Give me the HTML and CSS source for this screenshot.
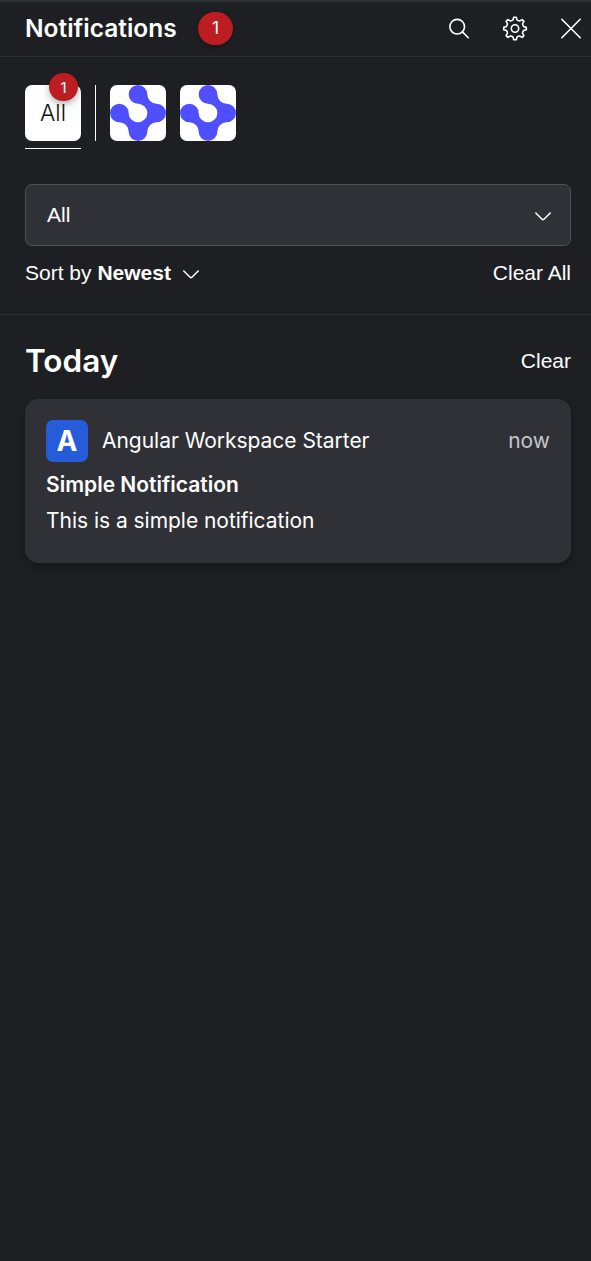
FILE: index.html
```html
<!DOCTYPE html>
<html lang="en">
<head>
<meta charset="utf-8">
<title>Notifications</title>
<link rel="stylesheet" href="styles.css">
</head>
<body>
<svg class="defs" width="0" height="0">
  <symbol id="logo" viewBox="0 0 56 56">
    <path fill="#4f4fff" d="M28 0A9.33 9.33 0 0 0 28 18.67A9.33 9.33 0 1 1 18.67 28A9.33 9.33 0 1 0 9.33 37.33A9.33 9.33 0 0 1 18.67 46.67A9.33 9.33 0 0 0 37.33 46.67A9.33 9.33 0 0 1 46.67 37.33A9.33 9.33 0 0 0 46.67 18.67A9.33 9.33 0 0 1 37.33 9.33A9.33 9.33 0 0 0 28 0Z"/>
  </symbol>
</svg>
<main class="panel">
  <header class="header">
    <h1 class="title">Notifications</h1>
    <span class="count">1</span>
    <div class="actions">
      <svg class="icon" viewBox="0 -.5 28 28"><circle cx="12.2" cy="12.2" r="7.3"/><path d="M17.4 17.4L23.3 23.3"/></svg>
      <svg class="icon" viewBox="-14 -14.5 28 28"><circle r="3.7"/><path d="M-1.3 -11.3H1.3L1.9 -8.8Q3.1 -7.5 4.88 -7.57L7.07 -8.91L8.91 -7.07L7.57 -4.88Q7.5 -3.1 8.8 -1.9L11.3 -1.3V1.3L8.8 1.9Q7.5 3.1 7.57 4.88L8.91 7.07L7.07 8.91L4.88 7.57Q3.1 7.5 1.9 8.8L1.3 11.3H-1.3L-1.9 8.8Q-3.1 7.5 -4.88 7.57L-7.07 8.91L-8.91 7.07L-7.57 4.88Q-7.5 3.1 -8.8 1.9L-11.3 1.3V-1.3L-8.8 -1.9Q-7.5 -3.1 -7.57 -4.88L-8.91 -7.07L-7.07 -8.91L-4.88 -7.57Q-3.1 -7.5 -1.9 -8.8Z"/></svg>
      <svg class="icon" viewBox="0 -.5 28 28"><path d="M4.8 4.8L23.2 23.2M23.2 4.8L4.8 23.2"/></svg>
    </div>
  </header>
  <section class="filters">
    <nav class="apps">
      <div class="tab">
        <div class="tile">All<span class="badge">1</span></div>
      </div>
      <div class="divider"></div>
      <div class="tile"><svg class="logo"><use href="#logo"/></svg></div>
      <div class="tile"><svg class="logo"><use href="#logo"/></svg></div>
    </nav>
    <div class="select"><span>All</span><svg class="chevron" viewBox="0 0 16 9"><path d="M.8 1L7.1 7.2Q8 8 8.9 7.2L15.2 1"/></svg></div>
    <div class="sort">
      <div class="sort-by">Sort by <b>Newest</b><svg class="chevron" viewBox="0 0 16 9"><path d="M.8 1L7.1 7.2Q8 8 8.9 7.2L15.2 1"/></svg></div>
      <span>Clear All</span>
    </div>
  </section>
  <section class="group">
    <div class="group-head"><h2 class="day">Today</h2><span class="clear">Clear</span></div>
    <article class="card">
      <div class="card-head">
        <span class="avatar">A</span>
        <span class="app-name">Angular Workspace Starter</span>
        <span class="time">now</span>
      </div>
      <h3 class="card-title">Simple Notification</h3>
      <p class="card-body">This is a simple notification</p>
    </article>
  </section>
</main>
</body>
</html>
```
FILE: styles.css
```css
* { box-sizing: border-box; }
body {
  margin: 0;
  background: #1e1f23;
  color: #fff;
  font: 21px/28px Inter, sans-serif;
}
h1, h2, h3, p { margin: 0; }
.defs { position: absolute; }
.panel {
  min-height: 1261px;
  border-top: 2px solid #2f3035;
}
.header {
  display: flex;
  align-items: center;
  height: 55px;
  padding: 0 6px 1px 25px;
  border-bottom: 1px solid #2f3035;
}
.title {
  padding-bottom: 2px;
  font-size: 24.5px;
  font-weight: 600;
}
.count {
  width: 35px;
  height: 33px;
  margin-left: 21.5px;
  border-radius: 17px;
  background: #bb1d20;
  box-shadow: 0 2px 4px rgba(0,0,0,.3);
  font-size: 17.5px;
  line-height: 32px;
  text-align: center;
}
.actions { display: flex; gap: 28px; margin-left: auto; padding-bottom: 1px; }
.icon {
  width: 28px;
  height: 28px;
  fill: none;
  stroke: #fff;
  stroke-width: 1.6;
  stroke-linecap: round;
  stroke-linejoin: round;
}
.filters {
  padding: 28px 20px 0 25px;
  height: 258px;
  border-bottom: 1px solid #2f3035;
}
.apps { display: flex; gap: 14px; height: 64px; }
.tab { border-bottom: 1px solid #fff; }
.tile {
  position: relative;
  width: 56px;
  height: 56px;
  border-radius: 7px;
  background: #fff;
  color: #111;
  font-size: 22.75px;
  font-weight: 350;
  line-height: 56px;
  text-align: center;
}
.logo { display: block; width: 56px; height: 56px; border-radius: 7px; }
.badge {
  position: absolute;
  top: -12px;
  right: 3px;
  width: 29px;
  height: 28px;
  border-radius: 14px;
  background: #bb1d20;
  box-shadow: 0 3px 7px rgba(0,0,0,.3);
  color: #fff;
  font-size: 15px;
  font-weight: 400;
  line-height: 29px;
}
.divider { width: 1px; height: 56px; background: #fff; }
.select {
  display: flex;
  align-items: center;
  justify-content: space-between;
  height: 62px;
  margin-top: 35px;
  padding: 0 19px 0 21px;
  border: 1px solid #505158;
  border-radius: 7px;
  background: #303136;
  font-family: "Liberation Sans", Arial, sans-serif;
}
.chevron {
  width: 16px;
  height: 9px;
  fill: none;
  stroke: #fff;
  stroke-width: 1.5;
  stroke-linecap: round;
  stroke-linejoin: round;
}
.select .chevron { margin-top: 2px; }
.sort {
  display: flex;
  justify-content: space-between;
  margin-top: 13px;
  font-family: "Liberation Sans", Arial, sans-serif;
}
.sort-by .chevron { margin-left: 12px; vertical-align: 1px; }
.group { padding: 25px 20px 0 25px; }
.group-head {
  display: flex;
  align-items: center;
  justify-content: space-between;
  height: 42px;
}
.day { font-size: 31.5px; font-weight: 600; }
.clear { font-family: "Liberation Sans", Arial, sans-serif; }
.card {
  height: 164px;
  margin-top: 17px;
  padding: 21px;
  border-radius: 14px;
  background: #303136;
  box-shadow: 0 4px 9px rgba(0,0,0,.3);
}
.card-head { display: flex; align-items: center; gap: 14px; }
.app-name, .card-body { letter-spacing: -.03px; }
.avatar {
  width: 42px;
  height: 42px;
  border-radius: 7px;
  background: #265cda;
  font-size: 28px;
  font-weight: 700;
  line-height: 42px;
  text-align: center;
}
.time { margin-left: auto; color: #c4c5cb; }
.card-title { margin-top: 9px; font-size: 21px; font-weight: 600; }
.card-body { margin-top: 8px; }
```
